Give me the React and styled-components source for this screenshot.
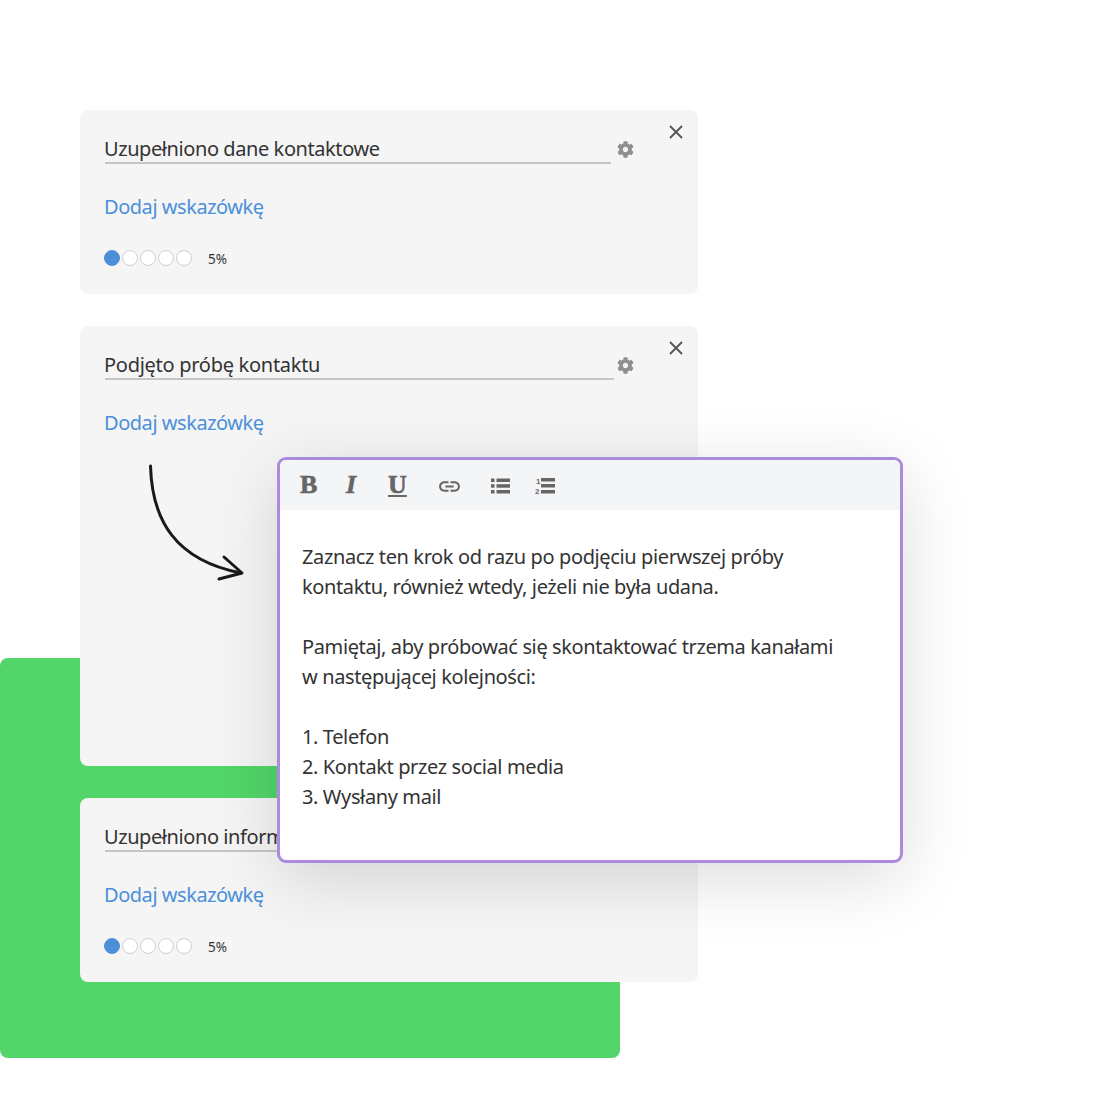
import React from "react";
import styled, { createGlobalStyle } from "styled-components";
import { FaCog } from "react-icons/fa";
import { MdLink } from "react-icons/md";

const Global = createGlobalStyle`
  html, body { margin: 0; padding: 0; background: #fff; }
  body { font-family: "Noto Sans", "Open Sans", sans-serif; }
`;

const Stage = styled.div`
  position: relative;
  width: 1100px;
  height: 1100px;
  overflow: hidden;
  background: #fff;
  box-sizing: border-box;
  padding: 110px 0 0 80px;
`;

const GreenBlock = styled.div`
  position: absolute;
  left: 0;
  top: 658px;
  width: 620px;
  height: 400px;
  background: #52d66a;
  border-radius: 8px;
`;

const CardList = styled.div`
  position: relative;
  display: flex;
  flex-direction: column;
  gap: 32px;
  width: 618px;
`;

const Card = styled.section`
  position: relative;
  box-sizing: border-box;
  min-height: ${(p) => p.$minHeight || 184}px;
  padding: 27px 24px 28px;
  background: #f5f5f5;
  border-radius: 8px;
`;

const TitleRow = styled.div`
  display: flex;
  align-items: center;
  gap: 6px;
`;

const TitleField = styled.div`
  box-sizing: border-box;
  width: ${(p) => p.$width}px;
  margin-left: 1px;
  height: 27px;
  border-bottom: 2px solid #c6c6c6;
  font-size: 20px;
  line-height: 23px;
  color: #333;
  white-space: nowrap;
  letter-spacing: ${(p) => p.$spacing || -0.42}px;
  text-indent: -1px;
`;

const GearButton = styled.span`
  display: flex;
  margin: -2px 0 0 ${(p) => p.$left || 0}px;
  color: #8f8f8f;
  font-size: 17px;
`;

const CloseIcon = styled.svg`
  position: absolute;
  top: 15px;
  right: 15px;
  width: 14px;
  height: 14px;
  stroke: #555;
  stroke-width: 1.8;
  fill: none;
`;

const HintLink = styled.a`
  display: block;
  margin-top: 28px;
  font-size: 20px;
  line-height: 30px;
  color: #4a90d9;
  letter-spacing: -0.46px;
`;

const ScoreRow = styled.div`
  display: flex;
  align-items: center;
  margin-top: 28px;
  height: 16px;
`;

const Dots = styled.div`
  display: flex;
  gap: 2px;
`;

const Dot = styled.span`
  box-sizing: border-box;
  width: 16px;
  height: 16px;
  border-radius: 50%;
  background: ${(p) => (p.$on ? "#4a90d9" : "#fff")};
  border: 1px solid ${(p) => (p.$on ? "#4a90d9" : "#cfcfcf")};
`;

const ScoreText = styled.span`
  margin-left: 16px;
  margin-top: 2px;
  font-size: 13.5px;
  line-height: 16px;
  color: #333;
`;

const Arrow = styled.svg`
  position: absolute;
  left: 130px;
  top: 450px;
  width: 130px;
  height: 140px;
  fill: none;
  stroke: #1a1a1a;
  stroke-width: 3;
  stroke-linecap: round;
  stroke-linejoin: round;
`;

const Popup = styled.div`
  position: absolute;
  left: 277px;
  top: 457px;
  width: 626px;
  height: 406px;
  box-sizing: border-box;
  background: #fff;
  border: 3px solid #ab8bdb;
  border-radius: 9px;
  box-shadow: 0 16px 70px rgba(0, 0, 0, 0.14);
  overflow: hidden;
`;

const Toolbar = styled.div`
  height: 50px;
  background: #f4f5f7;
  display: flex;
  align-items: center;
  padding-left: 20px;
  color: #666;
`;

const ToolGlyph = styled.span`
  width: ${(p) => p.$w}px;
  font-family: "Liberation Serif", serif;
  font-weight: 700;
  font-size: 26px;
  line-height: 28px;
  font-style: ${(p) => (p.$italic ? "italic" : "normal")};
  text-decoration: ${(p) => (p.$under ? "underline" : "none")};
  text-decoration-thickness: 2px;
  text-underline-offset: 2px;
  -webkit-text-stroke: 0.6px #666;
  padding-left: ${(p) => p.$pad || 0}px;
  box-sizing: border-box;
`;

const ToolIcon = styled.span`
  display: flex;
  width: ${(p) => p.$w}px;
  font-size: ${(p) => p.$size}px;
  margin-top: ${(p) => p.$top || 0}px;
  stroke: currentColor;
  stroke-width: ${(p) => p.$stroke || 0}px;
`;

const ListSvg = styled.svg`
  display: block;
  fill: #666;
`;

const ListNumber = styled.text`
  font-family: "Liberation Sans", sans-serif;
  font-size: 8px;
  font-weight: 700;
`;

const Editor = styled.div`
  padding: 32px 22px;
  font-size: 20px;
  line-height: 30px;
  color: #333;
  letter-spacing: -0.38px;
`;

const Line = styled.div`
  min-height: 30px;
  white-space: nowrap;
`;

function Score() {
  return (
    <ScoreRow>
      <Dots>
        <Dot $on />
        <Dot />
        <Dot />
        <Dot />
        <Dot />
      </Dots>
      <ScoreText>5%</ScoreText>
    </ScoreRow>
  );
}

function Close() {
  return (
    <CloseIcon viewBox="0 0 14 14">
      <path d="M1 1 L13 13 M13 1 L1 13" />
    </CloseIcon>
  );
}

function BulletList() {
  return (
    <ListSvg width="19" height="16" viewBox="0 0 19 16">
      <rect x="0" y="0.5" width="3.5" height="3.5" />
      <rect x="0" y="6.2" width="3.5" height="3.5" />
      <rect x="0" y="12" width="3.5" height="3.5" />
      <rect x="5.5" y="0.5" width="13.5" height="3.5" />
      <rect x="5.5" y="6.2" width="13.5" height="3.5" />
      <rect x="5.5" y="12" width="13.5" height="3.5" />
    </ListSvg>
  );
}

function NumberList() {
  return (
    <ListSvg width="20" height="17" viewBox="0 0 20 17">
      <ListNumber x="1" y="7">1</ListNumber>
      <ListNumber x="0" y="16.5">2</ListNumber>
      <rect x="6" y="1" width="14" height="3.5" />
      <rect x="6" y="7" width="14" height="3.5" />
      <rect x="6" y="13" width="14" height="3.5" />
    </ListSvg>
  );
}

const lines = [
  "Zaznacz ten krok od razu po podjęciu pierwszej próby",
  "kontaktu, również wtedy, jeżeli nie była udana.",
  "",
  "Pamiętaj, aby próbować się skontaktować trzema kanałami",
  "w następującej kolejności:",
  "",
  "1. Telefon",
  "2. Kontakt przez social media",
  "3. Wysłany mail",
];

export default function App() {
  return (
    <Stage>
      <Global />
      <GreenBlock />
      <CardList>
        <Card>
          <Close />
          <TitleRow>
            <TitleField $width={506}>Uzupełniono dane kontaktowe</TitleField>
            <GearButton><FaCog /></GearButton>
          </TitleRow>
          <HintLink>Dodaj wskazówkę</HintLink>
          <Score />
        </Card>
        <Card $minHeight={440}>
          <Close />
          <TitleRow>
            <TitleField $width={509} $spacing={-0.28}>Podjęto próbę kontaktu</TitleField>
            <GearButton $left={-3}><FaCog /></GearButton>
          </TitleRow>
          <HintLink>Dodaj wskazówkę</HintLink>
        </Card>
        <Card>
          <Close />
          <TitleRow>
            <TitleField $width={506}>Uzupełniono informacje</TitleField>
            <GearButton><FaCog /></GearButton>
          </TitleRow>
          <HintLink>Dodaj wskazówkę</HintLink>
          <Score />
        </Card>
      </CardList>
      <Arrow viewBox="0 0 130 140">
        <path d="M20.5 16 C22 70 45 110 111 123" />
        <path d="M94 107 L112 123 L89 129" />
      </Arrow>
      <Popup>
        <Toolbar>
          <ToolGlyph $w={44}>B</ToolGlyph>
          <ToolGlyph $w={44} $italic $pad={2}>I</ToolGlyph>
          <ToolGlyph $w={49} $under>U</ToolGlyph>
          <ToolIcon $w={54} $size={25} $top={2} $stroke={0.8}><MdLink /></ToolIcon>
          <ToolIcon $w={44} $top={1}><BulletList /></ToolIcon>
          <ToolIcon $w={30} $top={1}><NumberList /></ToolIcon>
        </Toolbar>
        <Editor>
          {lines.map((l, i) => (
            <Line key={i}>{l}</Line>
          ))}
        </Editor>
      </Popup>
    </Stage>
  );
}
